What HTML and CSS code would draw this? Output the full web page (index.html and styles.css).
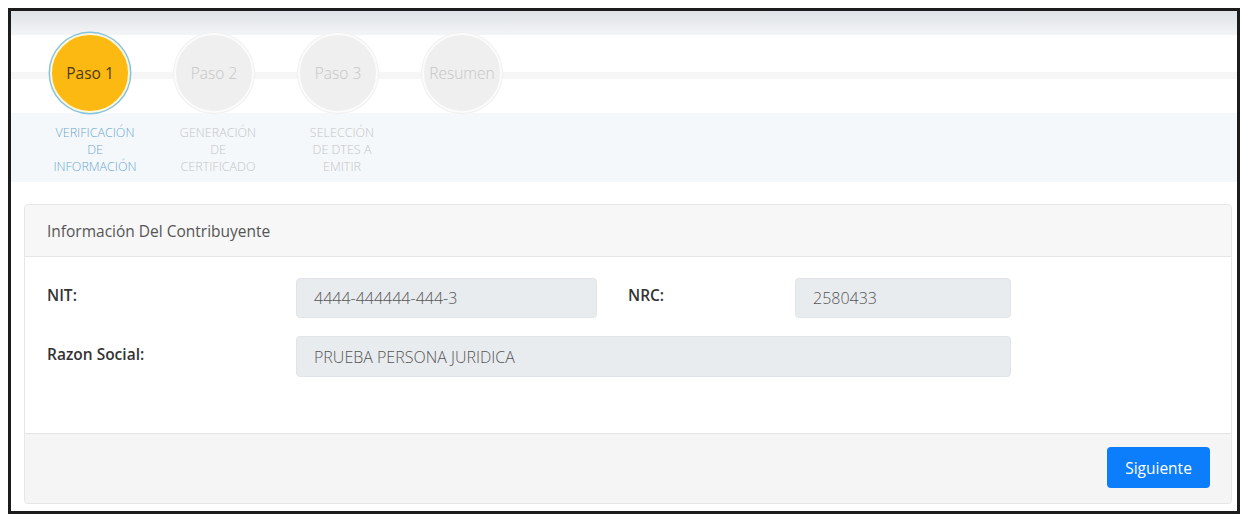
FILE: index.html
```html
<!DOCTYPE html>
<html lang="es">
<head>
<meta charset="utf-8">
<title>Paso 1</title>
<link rel="stylesheet" href="styles.css">
</head>
<body>
<div class="frame">
  <div class="stepper">
    <div class="step active">
      <div class="circle">Paso 1</div>
      <div class="label">VERIFICACIÓN<br>DE<br>INFORMACIÓN</div>
    </div>
    <div class="step">
      <div class="circle">Paso 2</div>
      <div class="label">GENERACIÓN<br>DE<br>CERTIFICADO</div>
    </div>
    <div class="step">
      <div class="circle">Paso 3</div>
      <div class="label">SELECCIÓN<br>DE DTES A<br>EMITIR</div>
    </div>
    <div class="step">
      <div class="circle">Resumen</div>
    </div>
  </div>
  <div class="card">
    <div class="card-header">Información Del Contribuyente</div>
    <div class="card-body">
      <div class="form-grid">
        <div class="flabel">NIT:</div>
        <div class="finput">4444-444444-444-3</div>
        <div class="flabel second">NRC:</div>
        <div class="finput">2580433</div>
        <div class="flabel">Razon Social:</div>
        <div class="finput wide">PRUEBA PERSONA JURIDICA</div>
      </div>
    </div>
    <div class="card-footer">
      <button class="btn">Siguiente</button>
    </div>
  </div>
</div>
</body>
</html>
```

FILE: styles.css
```css
html, body {
  margin: 0;
  padding: 0;
  background: #ffffff;
}
body {
  font-family: "Open Sans", "Noto Sans", sans-serif;
  color: #333;
}
.frame {
  margin: 8px;
  border: 3px solid #1c1c1c;
  height: 500px;
  background: #fff;
  overflow: hidden;
}
.stepper {
  height: 171px;
  box-sizing: border-box;
  padding: 22px 0 0 17px;
  display: flex;
  align-items: flex-start;
  background:
    linear-gradient(#dfe3e7, #f3f4f6) 0 0 / 100% 24px no-repeat,
    linear-gradient(#f6f6f6, #f6f6f6) 0 61px / 100% 7px no-repeat,
    linear-gradient(#f4f8fb, #f4f8fb) 0 102px / 100% 69px no-repeat,
    #fff;
}
.step {
  width: 124px;
  display: flex;
  flex-direction: column;
  align-items: center;
}
.circle {
  width: 76px;
  height: 76px;
  border-radius: 50%;
  border: 2px solid #fbfbfb;
  box-shadow: 0 0 0 1px #f0f0f0;
  background: #efefef;
  display: flex;
  align-items: center;
  justify-content: center;
  font-size: 15.5px;
  font-weight: 300;
  color: #c6c6c6;
}
.step.active .circle {
  background: #fbb912;
  border-color: #fff6dc;
  box-shadow: 0 0 0 1.5px #86c4dd;
  color: #4b3b10;
  font-weight: 400;
}
.label {
  margin-top: 11px;
  padding-left: 8px;
  font-size: 12.5px;
  line-height: 17px;
  font-weight: 300;
  text-align: center;
  color: #c5c5c5;
}
.step.active .label {
  color: #6fa8cf;
  padding-left: 10px;
}
.card {
  margin: 22px 5px 0 13px;
  border: 1px solid #e6e6e6;
  border-radius: 4px;
  background: #fff;
}
.card-header {
  height: 52px;
  box-sizing: border-box;
  padding-left: 22px;
  display: flex;
  align-items: center;
  background: #f7f7f7;
  border-bottom: 1px solid #e6e6e6;
  font-size: 15.5px;
  color: #555;
  border-radius: 4px 4px 0 0;
}
.card-body {
  padding: 21px 0 56px 22px;
}
.form-grid {
  display: grid;
  grid-template-columns: 249px 301px 198px 216px;
  grid-template-rows: 40px 41px;
  row-gap: 18px;
}
.flabel {
  display: flex;
  align-items: center;
  font-size: 15.5px;
  font-weight: 600;
  color: #333;
  padding-bottom: 6px;
}
.flabel.second {
  padding-left: 31px;
}
.finput {
  display: flex;
  align-items: center;
  box-sizing: border-box;
  padding-left: 17px;
  background: #e9ecef;
  border: 1px solid #e1e4e8;
  border-radius: 4px;
  font-size: 16px;
  font-weight: 300;
  color: #555;
}
.finput.wide {
  grid-column: 2 / 5;
}
.card-footer {
  border-top: 1px solid #e3e3e3;
  background: #f5f5f5;
  padding: 13px 21px 15px;
  display: flex;
  justify-content: flex-end;
  border-radius: 0 0 4px 4px;
}
.btn {
  width: 103px;
  height: 41px;
  border: none;
  border-radius: 4px;
  background: #0c7efb;
  color: #fff;
  font-family: "Open Sans", "Noto Sans", sans-serif;
  font-size: 15.5px;
  padding: 0;
}
```
